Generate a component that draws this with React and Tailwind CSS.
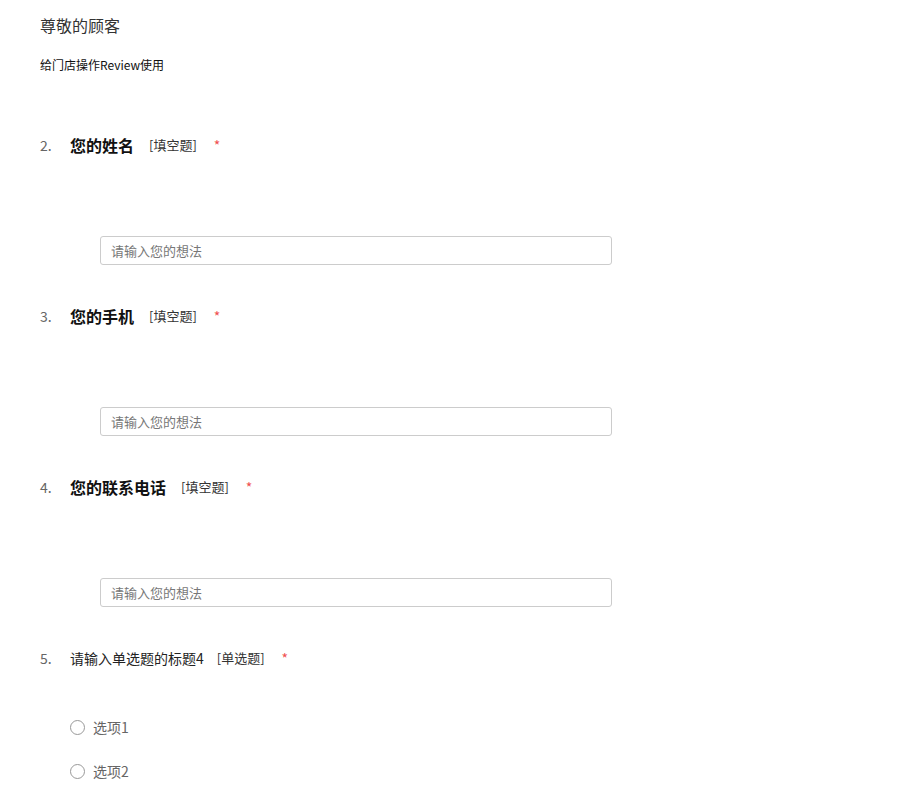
export default function App() {
  const font = { fontFamily: '"Noto Sans CJK SC", "Noto Sans", sans-serif' };
  const Fill = ({ n, title }) => (
    <div>
      <div className="flex items-center h-[24px] text-[14px]">
        <span className="w-[30px] text-[#666]">{n}.</span>
        <span className="text-[16px] font-bold text-[#111]">{title}</span>
        <span className="ml-[15px] text-[13px] text-[#333]">[填空题]</span>
        <span className="ml-[17px] text-[14px] text-[#f05050]">*</span>
      </div>
      <div className="pl-[60px] mt-[79px]">
        <div className="w-[512px] h-[29px] border border-[#ccc] rounded-[3px] flex items-center pl-[10px] text-[13px] text-[#777]">
          请输入您的想法
        </div>
      </div>
    </div>
  );
  return (
    <div className="bg-white w-[900px] h-[800px] overflow-hidden pl-[40px] pt-[13px]" style={font}>
      <div className="text-[16px] leading-[24px] text-[#333]">尊敬的顾客</div>
      <div className="text-[12px] leading-[18px] text-[#111] mt-[19px]">给门店操作Review使用</div>
      <div className="mt-[59px] flex flex-col gap-[39px]">
        <Fill n={2} title="您的姓名" />
        <Fill n={3} title="您的手机" />
        <Fill n={4} title="您的联系电话" />
        <div>
          <div className="flex items-center h-[24px]">
            <span className="w-[30px] text-[14px] text-[#666]">5.</span>
            <span className="text-[14px] font-normal text-[#222]">请输入单选题的标题4</span>
            <span className="ml-[13px] text-[13px] text-[#333]">[单选题]</span>
            <span className="ml-[17px] text-[14px] text-[#f05050]">*</span>
          </div>
          <div className="pl-[30px] mt-[46px] flex flex-col gap-[22px]">
            {["选项1", "选项2"].map((o) => (
              <div key={o} className="flex items-center h-[22px]">
                <span className="w-[15px] h-[15px] rounded-full border border-[#999] bg-white"></span>
                <span className="ml-[8px] text-[14px] text-[#666]">{o}</span>
              </div>
            ))}
          </div>
        </div>
      </div>
    </div>
  );
}
